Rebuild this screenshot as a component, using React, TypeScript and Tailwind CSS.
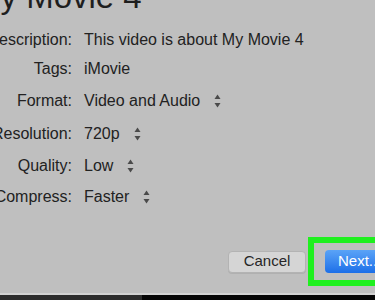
import React from "react";

const FONT = { fontFamily: '"Liberation Sans", Arial, sans-serif' };

function Stepper() {
  return (
    <svg width="7" height="14" viewBox="0 0 7 14" className="ml-[14px] shrink-0">
      <path d="M3.5 0.5 L6.5 5 L0.5 5 Z" fill="#4a4a4a" />
      <path d="M0.5 9 L6.5 9 L3.5 13.5 Z" fill="#4a4a4a" />
    </svg>
  );
}

const rows = [
  { label: "Description:", value: "This video is about My Movie 4", h: "h-[29px]", stepper: false },
  { label: "Tags:", value: "iMovie", h: "h-[30px]", stepper: false },
  { label: "Format:", value: "Video and Audio", h: "h-[33px]", stepper: true },
  { label: "Resolution:", value: "720p", h: "h-[33px]", stepper: true },
  { label: "Quality:", value: "Low", h: "h-[31px]", stepper: true },
  { label: "Compress:", value: "Faster", h: "h-[32px]", stepper: true },
];

export default function App() {
  return (
    <div
      className="relative w-[375px] h-[300px] overflow-hidden bg-[#bfbfbf] text-[#222] flex flex-col"
      style={FONT}
    >
      {/* Title (cut off at top) */}
      <div className="mt-[-20px] ml-[-27px] h-[33px] text-[33px] leading-none whitespace-nowrap text-[#1e1e1e]">
        My Movie 4
      </div>

      {/* Settings form */}
      <div className="mt-[12px] flex flex-col">
        {rows.map((r) => (
          <div key={r.label} className={`flex items-center ${r.h}`}>
            <div className="shrink-0 ml-[-28px] w-[100px] text-right text-[16px] whitespace-nowrap">{r.label}</div>
            <div className="shrink-0 ml-[12px] text-[16px] whitespace-nowrap">{r.value}</div>
            {r.stepper && <Stepper />}
          </div>
        ))}
      </div>

      <div className="flex-1" />

      {/* Buttons */}
      <div className="flex items-center h-[23px] mb-[20px]">
        <div className="shrink-0 ml-[228px] w-[78px] h-[22px] rounded-[4px] bg-[#d5d5d5] border border-[#b3b3b3] shadow-[0_1px_0_rgba(0,0,0,0.08)] flex items-center justify-center text-[15px] text-[#262626]">
          Cancel
        </div>
        <div className="shrink-0 ml-[19px] w-[70px] h-[23px] rounded-l-[4px] bg-gradient-to-b from-[#5aa3f7] to-[#1b6fe8] flex items-center pl-[13px] text-[15px] text-white whitespace-nowrap">
          Next...
        </div>
      </div>

      {/* Bottom edge */}
      <div className="h-[2px] bg-[#d2d2d2]" />
      <div className="flex h-[5px]">
        <div className="w-[142px] bg-[#2c2c2c]" />
        <div className="flex-1 bg-[#050505]" />
      </div>

      {/* Green highlight annotation */}
      <div className="absolute left-[308px] top-[237px] w-[80px] h-[49px] border-[6px] border-[#1ff01f]" />
    </div>
  );
}
